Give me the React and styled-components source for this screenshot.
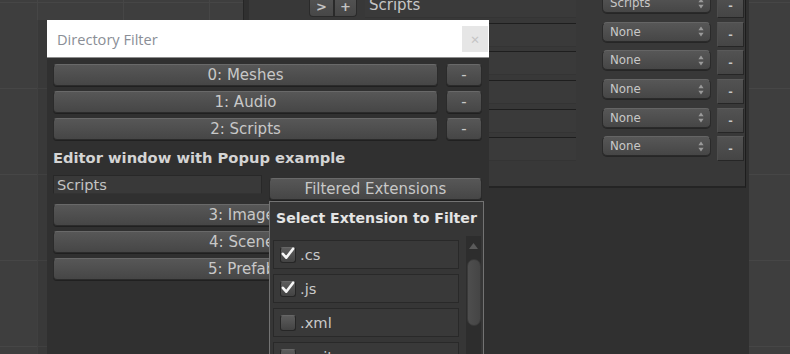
import React from "react";
import styled, { createGlobalStyle } from "styled-components";

const GlobalStyle = createGlobalStyle`
  html, body {
    margin: 0;
    padding: 0;
    background: #3e3e3e;
  }
  body {
    font-family: "DejaVu Sans", Verdana, sans-serif;
  }
`;

const Canvas = styled.div`
  position: relative;
  width: 790px;
  height: 354px;
  overflow: hidden;
  background-color: #3e3e3e;
  background-image: linear-gradient(to right, #464646 1px, transparent 1px),
    linear-gradient(to bottom, #464646 1px, transparent 1px);
  background-size: 86px 86px;
  background-position: 37px 2px;
`;

/* ---------- back window (docked inspector) ---------- */

const Dock = styled.div`
  position: absolute;
  left: 243px;
  top: 0;
  width: 506px;
  height: 354px;
  box-sizing: border-box;
  padding-left: 5px;
  background: #303030;
  border-left: 1px solid #262626;
`;

const BackPanel = styled.div`
  width: 497px;
  height: 188px;
  box-sizing: border-box;
  overflow: hidden;
  background: #383838;
  border-right: 1px solid #1d1d1d;
  border-bottom: 2px solid #242424;
`;

const BackList = styled.div`
  display: flex;
  flex-direction: column;
  gap: 3.7px;
  margin-top: -7px;
`;

const BackRow = styled.div`
  display: flex;
  align-items: flex-start;
  height: 25px;
`;

const Controls = styled.div`
  width: 116px;
  height: 24px;
  box-sizing: border-box;
  padding-right: 8px;
  display: flex;
  justify-content: flex-end;
`;

const SmallBtn = styled.div`
  width: ${(p) => p.w}px;
  height: 24px;
  box-sizing: border-box;
  display: flex;
  align-items: flex-end;
  justify-content: center;
  padding-bottom: 2px;
  background: linear-gradient(#555, #474747);
  border: 1px solid #2a2a2a;
  border-top-color: #5c5c5c;
  border-radius: 0 0 ${(p) => (p.last ? 4 : 0)}px ${(p) => (p.first ? 4 : 0)}px;
  color: #c4c4c4;
  font-size: 13px;
  font-weight: bold;
`;

const Field = styled.div`
  width: 211px;
  height: 24px;
  margin-top: 1px;
  box-sizing: border-box;
  padding-left: 4px;
  background: #3a3a3a;
  border-top: 1px solid #1e1e1e;
  border-bottom: 1px solid #343434;
  color: #c6c6c6;
  font-size: 15px;
  line-height: 21px;
  white-space: nowrap;
`;

const Dropdown = styled.div`
  width: 109px;
  height: 20px;
  margin-left: 26px;
  box-sizing: border-box;
  padding: 0 6px 0 7px;
  display: flex;
  align-items: center;
  justify-content: space-between;
  background: linear-gradient(#575757, #464646);
  border: 1px solid #2a2a2a;
  border-top-color: #656565;
  border-radius: 5px;
  box-shadow: 0 1px 0 #262626;
  color: #c8c8c8;
  font-size: 11.8px;
`;

const BackMinus = styled.div`
  width: 27px;
  height: 25px;
  margin-left: 6px;
  box-sizing: border-box;
  display: flex;
  align-items: flex-end;
  justify-content: center;
  padding-bottom: 5px;
  background: linear-gradient(#525252, #454545);
  border: 1px solid #262626;
  border-top-color: #5a5a5a;
  border-left-color: #4e4e4e;
  color: #c8c8c8;
  font-size: 11px;
  font-weight: bold;
`;

const UpDown = () => (
  <svg width="6" height="11" viewBox="0 0 6 11">
    <path d="M3 0.5 L5.6 4.2 H0.4 Z M3 10.5 L5.6 6.8 H0.4 Z" fill="#9a9a9a" />
  </svg>
);

/* ---------- front window ---------- */

const Window = styled.div`
  position: absolute;
  left: 47px;
  top: 20px;
  width: 442px;
  height: 340px;
  display: flex;
  flex-direction: column;
  background: #303030;
  box-shadow: -10px 0 0 rgba(0, 0, 0, 0.08);
`;

const TitleBar = styled.div`
  height: 38px;
  box-sizing: border-box;
  display: flex;
  align-items: center;
  justify-content: space-between;
  padding-left: 10px;
  background: #ffffff;
  border-bottom: 1px solid #8d8d8d;
`;

const Title = styled.span`
  font-family: "Open Sans", "Noto Sans", sans-serif;
  font-size: 14.6px;
  color: #8a8e96;
`;

const Close = styled.div`
  width: 26px;
  height: 26px;
  margin-right: 1px;
  display: flex;
  align-items: center;
  justify-content: center;
  background: #e6e6e6;
  color: #c4c4c4;
  font-family: "Noto Sans", sans-serif;
  font-size: 15px;
`;

const Body = styled.div`
  display: flex;
  flex-direction: column;
  gap: 5px;
  padding: 6px 7px 0 6px;
`;

const Row = styled.div`
  display: flex;
  align-items: flex-start;
  gap: ${(p) => p.gap || 8}px;
  height: ${(p) => p.h || 22}px;
`;

const Button = styled.div`
  flex: ${(p) => (p.w ? "none" : 1)};
  width: ${(p) => (p.w ? `${p.w}px` : "auto")};
  height: 22px;
  margin-top: ${(p) => p.mt || 0}px;
  box-sizing: border-box;
  display: flex;
  align-items: center;
  justify-content: center;
  background: linear-gradient(#575757, #464646);
  border: 1px solid #2b2b2b;
  border-top-color: #696969;
  border-radius: 4px;
  box-shadow: 0 1px 0 #202020;
  color: #c8c8c8;
  font-size: 15px;
  white-space: nowrap;
  overflow: hidden;
`;

const Label = styled.div`
  height: 25px;
  line-height: 25px;
  color: #d4d4d4;
  font-size: 14.7px;
  font-weight: bold;
  white-space: nowrap;
`;

const TextField = styled.div`
  width: 209px;
  height: 19px;
  box-sizing: border-box;
  padding-left: 3px;
  background: #393939;
  border: 1px solid #282828;
  border-bottom-color: #333;
  color: #c4c4c4;
  font-size: 14.6px;
  line-height: 17px;
`;

/* ---------- popup ---------- */

const Popup = styled.div`
  position: absolute;
  left: 269px;
  top: 201px;
  width: 215px;
  height: 160px;
  box-sizing: border-box;
  background: #363636;
  border: 1px solid #737373;
  border-bottom: none;
`;

const PopupTitle = styled.div`
  margin: 6px 0 0 6px;
  height: 20px;
  line-height: 20px;
  color: #e4e4e4;
  font-size: 14.1px;
  font-weight: bold;
  white-space: nowrap;
`;

const PopupBody = styled.div`
  display: flex;
  align-items: flex-start;
  gap: 7px;
  padding-left: 3px;
  margin-top: 8px;
`;

const ItemList = styled.div`
  width: 186px;
  margin-top: 4px;
  display: flex;
  flex-direction: column;
  gap: 5px;
`;

const Item = styled.div`
  height: 29px;
  box-sizing: border-box;
  display: flex;
  align-items: center;
  gap: 4px;
  padding-left: 6px;
  background: #393939;
  border: 1px solid #292929;
  color: #cacaca;
  font-size: 14.7px;
`;

const Check = styled.div`
  width: 16px;
  height: 16px;
  box-sizing: border-box;
  display: flex;
  align-items: center;
  justify-content: center;
  background: linear-gradient(#5c5c5c, #434343);
  border: 1px solid #262626;
  border-top-color: #666;
  border-radius: 3px;
`;

const ScrollTrack = styled.div`
  width: 15px;
  height: 130px;
  display: flex;
  flex-direction: column;
  align-items: center;
  background: #2d2d2d;
`;

const ScrollArrow = styled.div`
  height: 20px;
  display: flex;
  align-items: center;
`;

const Thumb = styled.div`
  width: 14px;
  height: 67px;
  margin-top: 3px;
  box-sizing: border-box;
  background: linear-gradient(to right, #4e4e4e, #454545);
  border: 1px solid #3a3a3a;
  border-radius: 7px;
`;

const Tick = () => (
  <svg width="15" height="15" viewBox="0 0 15 15" style={{ marginTop: -2 }}>
    <path
      d="M2 7.8 L5.6 12 L13 2.4"
      fill="none"
      stroke="#f6f6f6"
      strokeWidth="2.8"
      strokeLinecap="round"
      strokeLinejoin="round"
    />
  </svg>
);

const backRows = ["Scripts", "None", "None", "None", "None", "None"];
const dirs = ["0: Meshes", "1: Audio", "2: Scripts"];
const moreDirs = ["3: Images", "4: Scenes", "5: Prefabs"];
const extensions = [
  { name: ".cs", on: true },
  { name: ".js", on: true },
  { name: ".xml", on: false },
  { name: ".unity", on: false },
];

export default function App() {
  return (
    <>
      <GlobalStyle />
      <Canvas>
        <Dock>
          <BackPanel>
            <BackList>
              {backRows.map((value, i) => (
                <BackRow key={i}>
                  <Controls>
                    {i === 0 && (
                      <>
                        <SmallBtn w={25} first>
                          &gt;
                        </SmallBtn>
                        <SmallBtn w={23} last>
                          +
                        </SmallBtn>
                      </>
                    )}
                  </Controls>
                  <Field>{i === 0 ? "Scripts" : ""}</Field>
                  <Dropdown>
                    <span>{value}</span>
                    <UpDown />
                  </Dropdown>
                  <BackMinus>-</BackMinus>
                </BackRow>
              ))}
            </BackList>
          </BackPanel>
        </Dock>

        <Window>
          <TitleBar>
            <Title>Directory Filter</Title>
            <Close>×</Close>
          </TitleBar>
          <Body>
            {dirs.map((d) => (
              <Row key={d}>
                <Button>{d}</Button>
                <Button w={36}>-</Button>
              </Row>
            ))}
            <Label>Editor window with Popup example</Label>
            <Row h={24} gap={7}>
              <TextField>Scripts</TextField>
              <Button mt={3}>Filtered Extensions</Button>
            </Row>
            {moreDirs.map((d) => (
              <Row key={d}>
                <Button>{d}</Button>
                <Button w={36}>-</Button>
              </Row>
            ))}
          </Body>
        </Window>

        <Popup>
          <PopupTitle>Select Extension to Filter</PopupTitle>
          <PopupBody>
            <ItemList>
              {extensions.map((e) => (
                <Item key={e.name}>
                  <Check>{e.on && <Tick />}</Check>
                  <span>{e.name}</span>
                </Item>
              ))}
            </ItemList>
            <ScrollTrack>
              <ScrollArrow>
                <svg width="9" height="6" viewBox="0 0 9 6">
                  <path d="M4.5 0 L9 6 H0 Z" fill="#5a5a5a" />
                </svg>
              </ScrollArrow>
              <Thumb />
            </ScrollTrack>
          </PopupBody>
        </Popup>
      </Canvas>
    </>
  );
}
